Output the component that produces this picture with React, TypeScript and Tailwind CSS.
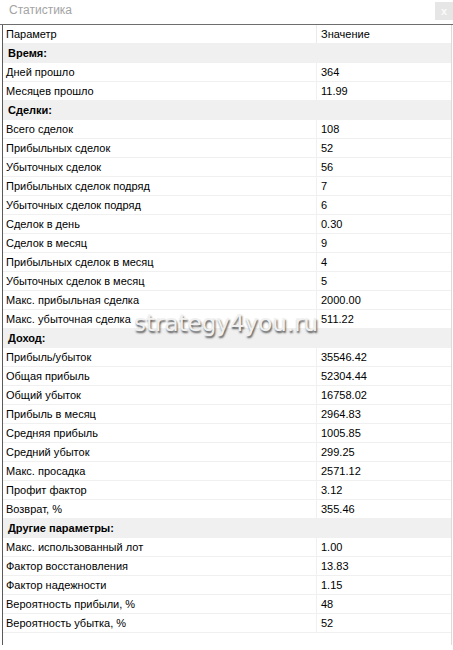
import React from "react";

type Row = { g?: string; k?: string; v?: string };

const rows: Row[] = [
  { g: "Время:" },
  { k: "Дней прошло", v: "364" },
  { k: "Месяцев прошло", v: "11.99" },
  { g: "Сделки:" },
  { k: "Всего сделок", v: "108" },
  { k: "Прибыльных сделок", v: "52" },
  { k: "Убыточных сделок", v: "56" },
  { k: "Прибыльных сделок подряд", v: "7" },
  { k: "Убыточных сделок подряд", v: "6" },
  { k: "Сделок в день", v: "0.30" },
  { k: "Сделок в месяц", v: "9" },
  { k: "Прибыльных сделок в месяц", v: "4" },
  { k: "Убыточных сделок в месяц", v: "5" },
  { k: "Макс. прибыльная сделка", v: "2000.00" },
  { k: "Макс. убыточная сделка", v: "511.22" },
  { g: "Доход:" },
  { k: "Прибыль/убыток", v: "35546.42" },
  { k: "Общая прибыль", v: "52304.44" },
  { k: "Общий убыток", v: "16758.02" },
  { k: "Прибыль в месяц", v: "2964.83" },
  { k: "Средняя прибыль", v: "1005.85" },
  { k: "Средний убыток", v: "299.25" },
  { k: "Макс. просадка", v: "2571.12" },
  { k: "Профит фактор", v: "3.12" },
  { k: "Возврат, %", v: "355.46" },
  { g: "Другие параметры:" },
  { k: "Макс. использованный лот", v: "1.00" },
  { k: "Фактор восстановления", v: "13.83" },
  { k: "Фактор надежности", v: "1.15" },
  { k: "Вероятность прибыли, %", v: "48" },
  { k: "Вероятность убытка, %", v: "52" },
];

export default function App() {
  return (
    <div
      className="relative w-[453px] h-[650px] bg-white overflow-hidden text-black"
      style={{ fontFamily: '"Liberation Sans", Arial, sans-serif' }}
    >
      <div className="h-[24px] flex items-start justify-between">
        <div className="pl-[9px] pt-[3px] text-[12px] leading-[14px] text-[#a4a4a4]">
          Статистика
        </div>
        <div className="mt-[2px] w-[18px] h-[18px] bg-[#e6e6e6] flex items-center justify-center text-[11px] leading-none text-[#fafafa] font-bold">
          x
        </div>
      </div>
      <div className="h-[1px] bg-[#6e6e6e]" />
      <div className="ml-[2px] border-l border-[#5a5a5a] h-[620px] flex flex-col">
        <div className="mr-[1px] border-r border-[#dcdcdc] flex-1 flex flex-col text-[11px]">
          <div className="h-[19px] flex border-b border-[#f0f0f0]">
            <div className="w-[314px] pl-[3px] flex items-center border-r border-[#eaeaea]">
              Параметр
            </div>
            <div className="flex-1 pl-[4px] flex items-center">Значение</div>
          </div>
          {rows.map((r, i) =>
            r.g ? (
              <div
                key={i}
                className="h-[19px] bg-[#f0f0f0] pl-[5px] flex items-center font-bold"
              >
                {r.g}
              </div>
            ) : (
              <div key={i} className="h-[19px] flex border-b border-[#f0f0f0]">
                <div className="w-[314px] pl-[3px] flex items-center border-r border-[#f0f0f0]">
                  {r.k}
                </div>
                <div className="flex-1 pl-[4px] flex items-center">{r.v}</div>
              </div>
            )
          )}
        </div>
      </div>
      <div
        className="absolute left-[134px] top-[309px] text-[23px] leading-[28px] text-[#f0f0f0] [text-shadow:1px_2px_2px_#555]"
        style={{ fontFamily: '"DejaVu Sans", Verdana, sans-serif' }}
      >
        strategy4you.ru
      </div>
    </div>
  );
}
